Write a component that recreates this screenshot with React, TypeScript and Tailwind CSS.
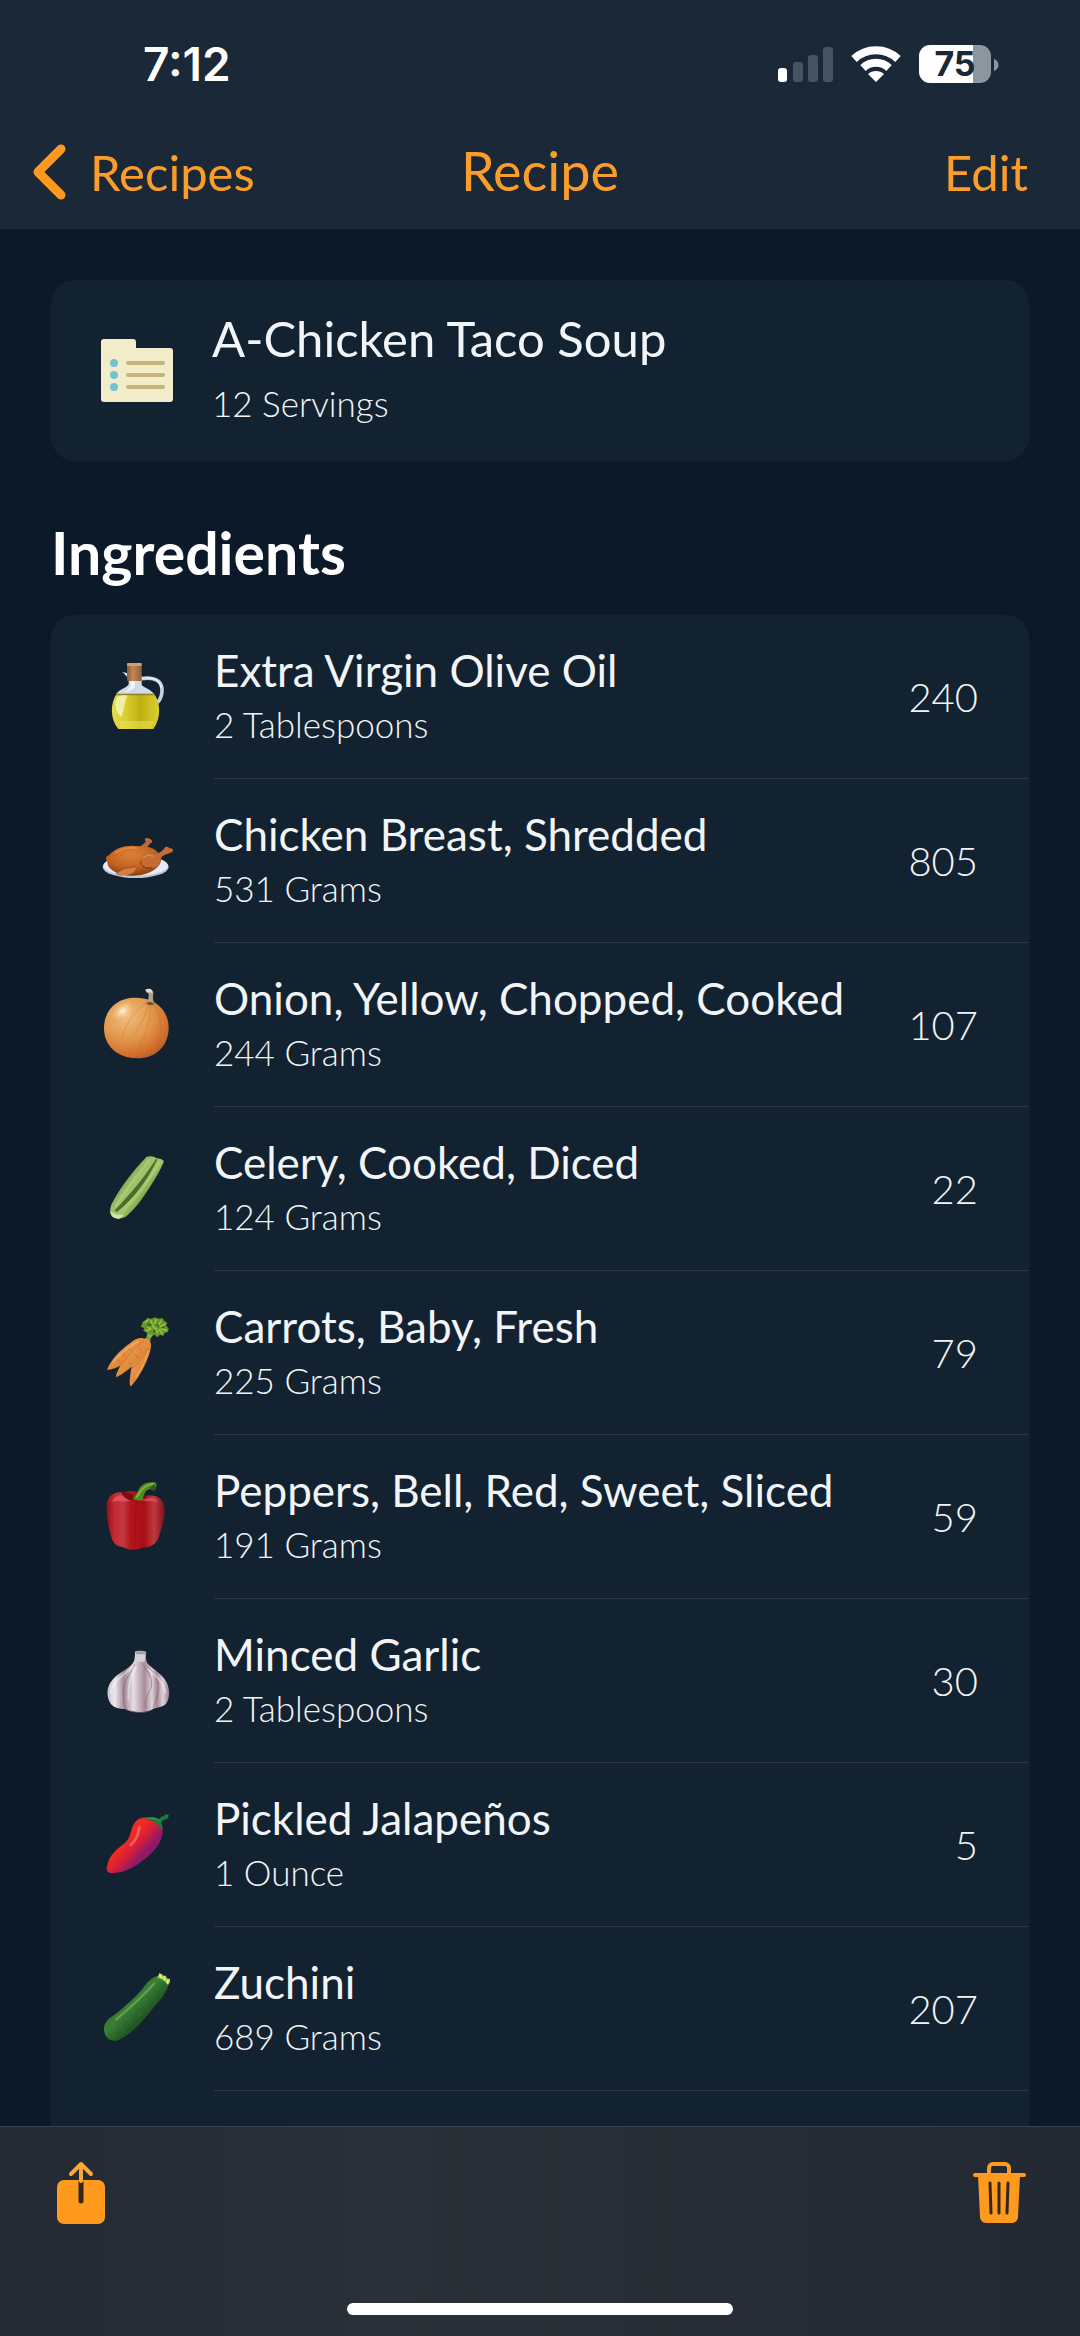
import React from "react";

const ingredients = [
  { name: "Extra Virgin Olive Oil", amount: "2 Tablespoons", calories: 240, icon: OliveOilIcon },
  { name: "Chicken Breast, Shredded", amount: "531 Grams", calories: 805, icon: ChickenIcon },
  { name: "Onion, Yellow, Chopped, Cooked", amount: "244 Grams", calories: 107, icon: OnionIcon },
  { name: "Celery, Cooked, Diced", amount: "124 Grams", calories: 22, icon: CeleryIcon },
  { name: "Carrots, Baby, Fresh", amount: "225 Grams", calories: 79, icon: CarrotsIcon },
  { name: "Peppers, Bell, Red, Sweet, Sliced", amount: "191 Grams", calories: 59, icon: PepperIcon },
  { name: "Minced Garlic", amount: "2 Tablespoons", calories: 30, icon: GarlicIcon },
  { name: "Pickled Jalapeños", amount: "1 Ounce", calories: 5, icon: ChiliIcon },
  { name: "Zuchini", amount: "689 Grams", calories: 207, icon: ZucchiniIcon },
];

function OliveOilIcon() {
  return (
    <svg viewBox="48 48 240 240" className="size-20 shrink-0" aria-hidden="true">
      <defs>
        <linearGradient id="oil" x1="0" x2="1">
          <stop offset="0" stopColor="#e3dc4a" />
          <stop offset="0.3" stopColor="#d9cf2e" />
          <stop offset="0.6" stopColor="#bfae12" />
          <stop offset="1" stopColor="#d8d030" />
        </linearGradient>
        <linearGradient id="cork" x1="0" x2="1">
          <stop offset="0" stopColor="#8a5a34" />
          <stop offset="0.4" stopColor="#c08a58" />
          <stop offset="1" stopColor="#8f5f38" />
        </linearGradient>
      </defs>
      <path d="M184 113c34-6 60 4 62 30 1 20-4 32-14 42" fill="none" stroke="#c5d0dc" strokeWidth="11" />
      <path d="M186 112c32-5 56 6 57 30" fill="none" stroke="#eef3f8" strokeWidth="4" />
      <path d="M126 93l18 4 2 12c-8-2-10-10-20-16z" fill="#dfe7ee" />
      <path d="M146 105h39v27c8 9 26 12 38 28H108c10-16 32-18 38-30z" fill="#d3dbe6" />
      <path d="M152 118h12v22l-30 16c6-10 18-14 18-22z" fill="#f3f6fa" />
      <path d="M110 158h112c20 26 22 72-2 106H115c-26-32-24-78-5-106z" fill="url(#oil)" />
      <path d="M110 158h112l3 5H107z" fill="#8f8620" />
      <path d="M112 168c8-6 22-6 30-4-10 18-8 40-18 64-18-12-22-40-12-60z" fill="#f5f3bb" opacity="0.85" />
      <path d="M118 240h104c-3 10-8 18-12 24h-86c-4-8-6-16-6-24z" fill="#eee65a" opacity="0.5" />
      <rect x="141" y="66" width="44" height="54" rx="3" fill="url(#cork)" />
      <rect x="141" y="66" width="44" height="9" rx="3" fill="#d0a072" />
    </svg>
  );
}

function ChickenIcon() {
  return (
    <svg viewBox="48 540 240 240" className="size-20 shrink-0" aria-hidden="true">
      <defs>
        <radialGradient id="roast" cx="0.45" cy="0.3" r="0.7">
          <stop offset="0" stopColor="#de8238" />
          <stop offset="0.6" stopColor="#c2631f" />
          <stop offset="1" stopColor="#8b4013" />
        </radialGradient>
      </defs>
      <ellipse cx="167" cy="678" rx="99" ry="33" fill="#b9c8d8" />
      <ellipse cx="167" cy="674" rx="97" ry="30" fill="#e6edf4" />
      <path d="M165 620c14-2 24-8 32-18-8-10 6-14 12-8 10 2 10 12 0 14-6 12-18 16-28 24z" fill="#b9693a" />
      <path d="M82 660c-8-4-4-16 6-18 20-24 56-32 90-26 34-4 58 12 66 34 2 28-34 52-82 54-46 2-84-20-80-44z" fill="url(#roast)" />
      <path d="M182 658c4-18 28-22 44-18 12-4 22-10 30-22 8-4 10 4 16 4 12 2 8 12-2 14-12 4-24 8-28 16 2 26-20 32-38 28-16-2-24-10-22-22z" fill="#c46c36" />
      <path d="M182 660c0 16 16 24 34 20" fill="none" stroke="#7c3510" strokeWidth="3" />
      <path d="M190 650c8-8 22-8 32-4" fill="none" stroke="#e09a5c" strokeWidth="4" opacity="0.7" />
      <path d="M108 698c14-14 38-20 60-20 2 12-14 24-32 24-12 4-22 2-28-4z" fill="#d18042" />
      <path d="M108 698c14-14 38-20 60-20" fill="none" stroke="#8c4115" strokeWidth="2" />
      <path d="M108 634c20-12 44-16 62-12" fill="none" stroke="#eda061" strokeWidth="6" strokeLinecap="round" opacity="0.5" />
    </svg>
  );
}

function OnionIcon() {
  return (
    <svg viewBox="48 72 240 240" className="size-20 shrink-0" aria-hidden="true">
      <defs>
        <radialGradient id="onion" cx="0.35" cy="0.3" r="0.75">
          <stop offset="0" stopColor="#f2bd7c" />
          <stop offset="0.5" stopColor="#e29a4d" />
          <stop offset="0.85" stopColor="#d56f2d" />
          <stop offset="1" stopColor="#b9622a" />
        </radialGradient>
        <radialGradient id="onionShine">
          <stop offset="0" stopColor="#fff3df" />
          <stop offset="1" stopColor="#f4c88f" stopOpacity="0" />
        </radialGradient>
      </defs>
      <path d="M72 202c0-56 40-92 92-92 62-2 102 38 102 90 0 56-40 92-94 92-60 0-100-38-100-90z" fill="url(#onion)" />
      <ellipse cx="128" cy="150" rx="36" ry="24" transform="rotate(-35 128 150)" fill="url(#onionShine)" />
      <path d="M200 126c-32 18-60 56-76 108M206 130c-6 30-24 62-46 92M212 130c0 44-10 84-34 126M218 130c24 26 32 70 20 118" fill="none" stroke="#b36c2c" strokeWidth="2" opacity="0.5" />
      <path d="M196 86c14-6 24 0 24 12-2 12-2 20 4 30-8 6-20 6-26-2 8-8 8-16 8-28-4-2-8-4-10-12z" fill="#b9a087" />
      <path d="M196 86c14-6 22 0 22 10l-10-2c-4 0-10-2-12-8z" fill="#e6dbcb" />
      <path d="M198 126c6-4 18-4 26 2-6 6-20 6-26-2z" fill="#7c4e25" />
    </svg>
  );
}

function CeleryIcon() {
  return (
    <svg viewBox="48 564 240 240" className="size-20 shrink-0" aria-hidden="true">
      <defs>
        <linearGradient id="celery" x1="0.1" y1="0.2" x2="0.8" y2="0.8">
          <stop offset="0.2" stopColor="#6f9a42" />
          <stop offset="0.4" stopColor="#9dbf68" />
          <stop offset="0.6" stopColor="#a5c76c" />
          <stop offset="0.8" stopColor="#6f9a3d" />
        </linearGradient>
      </defs>
      <path d="M200 587c10-3 22-2 30 5 8 0 18 3 22 9-10 25-24 49-38 70-20 32-42 66-70 90-12 14-36 14-48 4-8-8-6-26 0-38 26-50 64-98 104-140z" fill="url(#celery)" />
      <path d="M228 594c-34 52-70 98-124 154l6 6c60-50 92-98 122-158z" fill="#47702a" />
      <path d="M240 604c-30 50-62 98-108 142" fill="none" stroke="#b3d080" strokeWidth="5" opacity="0.7" />
      <path d="M210 596c-38 46-74 90-104 142" fill="none" stroke="#b3cf86" strokeWidth="6" opacity="0.7" />
      <path d="M92 750c8 10 24 14 40 10l-12 13c-12 2-30-4-28-23z" fill="#cfe3aa" />
    </svg>
  );
}

function CarrotsIcon() {
  return (
    <svg viewBox="48 66 240 240" className="size-20 shrink-0" aria-hidden="true">
      <defs>
        <linearGradient id="carrot" x1="0" y1="0" x2="1" y2="1">
          <stop offset="0" stopColor="#f1a75e" />
          <stop offset="0.5" stopColor="#e38d3e" />
          <stop offset="1" stopColor="#b9601f" />
        </linearGradient>
      </defs>
      <path d="M196 150c4-20 12-34 26-46l6 6c-10 12-16 26-18 44z" fill="#6f9f2c" />
      <path d="M210 140c2-8 14-18 22-28M206 136c-2-12-4-20-2-30" fill="none" stroke="#8bbb3e" strokeWidth="6" />
      <path d="M188 92l10-6 4-6 12 4 10-5 12 4 12-2 4 8 10 6-4 10 8 6-2 12-10 2-4 10-10-4-8 8-8-8-8 4-4-8-8 4-6-8-8-4 2-8-10-4 4-8z" fill="#67952a" />
      <path d="M196 94l6-6M212 88l4 10M228 86l-4 12M242 90l-6 12M254 100l-12 6M258 118l-14-4M246 128l-8-12M204 108l8 6M198 120l10-4M228 112l4 12M218 104l6 8" stroke="#94c244" strokeWidth="5" strokeLinecap="round" />
      <path d="M209 98l4 4M232 100l3 5M221 124l3-6M248 110l4-2M203 100l4 5" stroke="#385c18" strokeWidth="4" strokeLinecap="round" />
      <path d="M190 142c-14-4-28 4-42 16-28 20-54 46-67 78 12 2 30-6 44-14 34-18 62-44 72-70z" fill="url(#carrot)" />
      <path d="M206 154c10 0 8 14 4 28-12 40-32 76-57 104-6-2-4-20-2-34 4-40 24-72 40-92z" fill="url(#carrot)" />
      <path d="M196 142c14 0 20 12 12 24-22 34-54 70-99 93-4-4 6-26 16-40 20-34 42-66 71-77z" fill="url(#carrot)" />
      <path d="M192 150c-26 14-50 46-66 72M206 172c-14 26-34 48-54 64" fill="none" stroke="#9f501a" strokeWidth="2" opacity="0.6" />
      <path d="M146 172l8 6M128 188l8 6M166 192l10 8M146 214l8 6M176 170l8 6M188 216l8 2M178 240l6 2M112 206l6 5" stroke="#9f501a" strokeWidth="2" opacity="0.7" />
      <path d="M174 152c-30 16-54 36-74 62M204 180c-6 28-20 54-36 78" fill="none" stroke="#ffc88b" strokeWidth="4" strokeLinecap="round" opacity="0.5" />
    </svg>
  );
}

function PepperIcon() {
  return (
    <svg viewBox="48 558 240 240" className="size-20 shrink-0" aria-hidden="true">
      <defs>
        <linearGradient id="pepper" x1="0" x2="1">
          <stop offset="0" stopColor="#93101a" />
          <stop offset="0.14" stopColor="#c62a33" />
          <stop offset="0.28" stopColor="#bf3a40" />
          <stop offset="0.42" stopColor="#b3131b" />
          <stop offset="0.65" stopColor="#a90f17" />
          <stop offset="0.82" stopColor="#bd3a3f" />
          <stop offset="1" stopColor="#7d0f17" />
        </linearGradient>
      </defs>
      <path d="M80 648c-2-30 20-48 50-44 22-6 50-4 64 10 30-6 58 6 60 38 2 34-10 60-18 88-10 22-28 30-50 30-22 10-42 8-58-2-24-2-32-16-36-38-8-28-12-50-12-82z" fill="url(#pepper)" />
      <path d="M124 604c18-4 34 6 40 16 10-10 26-8 36-4-8 12-22 14-36 12-16 2-32-4-40-24z" fill="#7c0b13" />
      <path d="M96 632c6-18 26-24 36-14 10 6 12 12 28 10-22 8-40-2-64 4z" fill="#e8696d" opacity="0.6" />
      <path d="M186 630c20-14 40-10 48 4-14-6-30-4-48-4z" fill="#e25c62" opacity="0.7" />
      <path d="M170 632c-6 36-2 84-6 138" fill="none" stroke="#850a13" strokeWidth="4" opacity="0.3" />
      <path d="M158 622c10-8 14-18 20-30 8-14 24-20 48-18 6 8 4 18-4 24-8-4-16-6-24 2-6 10-10 18-8 26-8 4-26 4-32-4z" fill="#4f8a22" />
      <path d="M170 618c10-10 14-34 50-40" fill="none" stroke="#85b53f" strokeWidth="5" strokeLinecap="round" />
      <path d="M208 592l14-12 6 8-6 12z" fill="#2f5f17" />
    </svg>
  );
}

function GarlicIcon() {
  return (
    <svg viewBox="48 60 240 240" className="size-20 shrink-0" aria-hidden="true">
      <defs>
        <linearGradient id="garlic" x1="0" x2="1">
          <stop offset="0" stopColor="#c8c3cb" />
          <stop offset="0.12" stopColor="#ece8ec" />
          <stop offset="0.27" stopColor="#a18a95" />
          <stop offset="0.42" stopColor="#e6dfe3" />
          <stop offset="0.6" stopColor="#a98c99" />
          <stop offset="0.72" stopColor="#dcd2d8" />
          <stop offset="0.8" stopColor="#a98896" />
          <stop offset="0.9" stopColor="#ddd3d9" />
          <stop offset="1" stopColor="#97828e" />
        </linearGradient>
      </defs>
      <path d="M165 92c8-4 26-4 34 0-2 14-2 28 4 36 18 18 44 30 58 58 10 24 8 48-4 64-12 10-28 10-38 14-18 12-62 14-84 0-16 0-30-2-42-14-14-22-14-48 0-68 20-28 50-34 66-56 6-10 6-22 6-34z" fill="url(#garlic)" />
      <path d="M164 130c-12 30-38 48-34 94 0 20 4 32 10 40M190 132c14 22 32 42 22 72-12 22-20 42-12 60M200 134c24 20 42 50 34 82-4 22-10 34-14 44" fill="none" stroke="#6e5261" strokeWidth="3" opacity="0.5" />
      <path d="M158 138c-22 22-58 36-66 78M168 140c-14 28-26 50-22 96M206 146c24 22 46 38 50 68" fill="none" stroke="#fff" strokeWidth="6" strokeLinecap="round" opacity="0.4" />
      <path d="M168 94c6-4 22-4 28 0l-2 28h-24z" fill="#d9d3d8" />
      <path d="M168 94c6-4 22-4 28 0v6h-28z" fill="#a89ca3" />
      <path d="M136 262c20 14 64 16 84 2-12 14-64 18-84-2z" fill="#6b525e" />
    </svg>
  );
}

function ChiliIcon() {
  return (
    <svg viewBox="48 552 240 240" className="size-20 shrink-0" aria-hidden="true">
      <defs>
        <linearGradient id="chili" x1="0.25" y1="0.3" x2="0.75" y2="0.75">
          <stop offset="0.25" stopColor="#ee2c24" />
          <stop offset="0.5" stopColor="#d81e39" />
          <stop offset="0.8" stopColor="#8f1a68" />
        </linearGradient>
      </defs>
      <path d="M188 590c30-4 62 12 60 44-4 40-38 70-70 92-22 16-46 28-76 30-18 2-26-6-20-22 6-30 24-46 48-64 26-22 20-42 32-62 6-10 14-16 26-18z" fill="url(#chili)" />
      <path d="M178 620c-4 20-8 38-26 52" fill="none" stroke="#ff9a8d" strokeWidth="8" strokeLinecap="round" opacity="0.5" />
      <path d="M190 590c16-2 34-4 46 4 6-4 8-10 16-8 2-6 8-8 14-4 0 8-4 14-14 14-4 2-6 4-8 8 2 8 4 14 4 22-10-14-20-16-26-24-10-6-20-8-32-12z" fill="#1c7a3c" />
      <path d="M206 592c12 0 24 0 32 8" fill="none" stroke="#3aa65a" strokeWidth="3" />
    </svg>
  );
}

function ZucchiniIcon() {
  return (
    <svg viewBox="48 24 240 240" className="size-20 shrink-0" aria-hidden="true">
      <defs>
        <linearGradient id="zucchini" x1="0.3" y1="0.3" x2="0.75" y2="0.75">
          <stop offset="0" stopColor="#2d6a2c" />
          <stop offset="0.3" stopColor="#3a8036" />
          <stop offset="0.6" stopColor="#276128" />
          <stop offset="1" stopColor="#163d1b" />
        </linearGradient>
      </defs>
      <path d="M230 46c14 2 28 10 36 24-8 34-36 56-56 84-26 32-58 66-92 82-16 8-36 0-42-14-10-22-2-38 12-50 38-28 72-56 102-92 10-14 22-28 40-34z" fill="url(#zucchini)" />
      <path d="M222 68c-34 38-74 74-114 108" fill="none" stroke="#86bd78" strokeWidth="7" strokeLinecap="round" opacity="0.5" />
      <path d="M214 92l4 4M196 112l5 5M176 134l5 5M156 152l5 4M136 172l5 5M120 194l5 4M198 134l4 4M176 160l4 4M150 182l4 4M128 210l4 4M102 206l4 4M226 80l4 4M100 224l4 2" stroke="#62a052" strokeWidth="3" strokeLinecap="round" opacity="0.4" />
      <path d="M232 50l6-14 8 4 4 4 8 0 2 8 10 2 0 10-6 8c-8-12-20-20-32-22z" fill="#a9cf4d" />
      <path d="M240 42l4 8M252 48l2 8M264 58l-2 8" stroke="#dcf08f" strokeWidth="5" strokeLinecap="round" />
    </svg>
  );
}

function FolderIcon() {
  return (
    <svg viewBox="0 0 80 80" className="size-20 shrink-0" aria-hidden="true">
      <path d="M8 9h29a3 3 0 0 1 3 3v6h34a3 3 0 0 1 3 3v48a3 3 0 0 1-3 3H8a3 3 0 0 1-3-3V12a3 3 0 0 1 3-3z" fill="#f3ecca" />
      <g fill="#74c4cf">
        <circle cx="18" cy="33" r="4" />
        <circle cx="18" cy="45" r="4" />
        <circle cx="18" cy="57" r="4" />
      </g>
      <path d="M32 33h35M32 45h35M32 57h35" stroke="#c3b57c" strokeWidth="4" strokeLinecap="round" />
    </svg>
  );
}

function StatusIcons() {
  return (
    <svg viewBox="777 40 222 46" className="h-[46px] w-[222px]" role="img" aria-label="Signal, Wi-Fi and battery">
      <rect x="778" y="67" width="9" height="14" rx="3" fill="#fff" />
      <rect x="793" y="61" width="10" height="20" rx="3" fill="#465360" />
      <rect x="808" y="54" width="10" height="27" rx="3" fill="#465360" />
      <rect x="823" y="46" width="10" height="35" rx="3" fill="#465360" />
      <g fill="none" stroke="#fff" strokeWidth="8">
        <path d="M854 58a32 32 0 0 1 44 0" />
        <path d="M863 67a19 19 0 0 1 26 0" />
      </g>
      <path d="M868 73c4-4 12-4 16 0l-8 8z" fill="#fff" />
      <path d="M930 44h43v38h-43a11 11 0 0 1-11-11V55a11 11 0 0 1 11-11z" fill="#fff" />
      <path d="M973 44h7a11 11 0 0 1 11 11v16a11 11 0 0 1-11 11h-7z" fill="#8d959e" />
      <path d="M994 58c6 2 6 10 0 12z" fill="#8d959e" />
      <text x="955" y="75" textAnchor="middle" fill="#1a2836" fontFamily="Inter, sans-serif" fontWeight="700" fontSize="34">
        75
      </text>
    </svg>
  );
}

export default function App() {
  return (
    <div className="flex h-screen flex-col bg-[#0c1928] font-[Lato,sans-serif] text-[#f2f5f7]">
      <header className="shrink-0 border-b border-[#1f2d3a] bg-[#1a2837] pt-[34px]">
        <div className="flex h-[60px] items-center justify-between pr-[81px] pl-[143px]">
          <span className="font-[Inter,sans-serif] text-[46px] leading-none font-semibold text-white">7:12</span>
          <StatusIcons />
        </div>

        <nav className="mt-[26px] grid h-[108px] grid-cols-[1fr_auto_1fr] items-start px-8 text-[#fb9d2b]">
          <a href="#recipes" className="flex items-center gap-6 text-[49px] leading-[104px]">
            <svg viewBox="0 0 34 58" className="h-[58px] w-[34px]" aria-hidden="true">
              <path d="M29 6L6 29l23 23" fill="none" stroke="#ff9a1f" strokeWidth="9" strokeLinecap="round" strokeLinejoin="round" />
            </svg>
            Recipes
          </a>
          <h1 className="text-center text-[54px] leading-[102px]">Recipe</h1>
          <button type="button" className="justify-self-end pr-5 text-[49px] leading-[104px]">
            Edit
          </button>
        </nav>
      </header>

      <main className="flex min-h-0 flex-1 flex-col overflow-hidden px-[51px] pt-[51px]">
        <section className="flex shrink-0 items-center gap-9 rounded-3xl bg-[#132231] pt-[25px] pr-[51px] pb-[26px] pl-[45px]">
          <FolderIcon />
          <div>
            <h2 className="text-[49px] leading-[66px]">A-Chicken Taco Soup</h2>
            <p className="text-[35px] leading-[64px] font-light">12 Servings</p>
          </div>
        </section>

        <h2 className="mt-[60px] mb-[30px] text-[59px] leading-[64px] font-bold text-white">Ingredients</h2>

        <ul className="flex-1 rounded-t-3xl bg-[#132231]">
          {ingredients.map(({ name, amount, calories, icon: Icon }) => (
            <li key={name} className="flex items-center gap-[38px] pl-[45px]">
              <Icon />
              <div className="flex h-[164px] flex-1 items-center justify-between border-b border-[#2a3743] pr-[51px]">
                <div>
                  <h3 className="text-[44px] leading-[54px]">{name}</h3>
                  <p className="text-[35px] leading-[54px] font-light">{amount}</p>
                </div>
                <span className="text-[40px] leading-none font-light">{calories}</span>
              </div>
            </li>
          ))}
        </ul>
      </main>

      <footer className="flex h-[210px] shrink-0 flex-col justify-between border-t border-[#3a434d] bg-linear-to-r from-[#232a31] via-[#2a3038] via-35% to-[#232932] pt-[33px] pb-[21px]">
        <div className="flex items-center justify-between px-[54px]">
          <button type="button" aria-label="Share">
            <svg viewBox="54 2160 54 66" className="h-[66px] w-[54px]" aria-hidden="true">
              <rect x="57" y="2180" width="48" height="44" rx="7" fill="#ff9a1f" />
              <path d="M81 2182v19" stroke="#33261a" strokeWidth="5" strokeLinecap="round" />
              <path d="M81 2181v-15M71 2174l10-10 10 10" fill="none" stroke="#fba73c" strokeWidth="4" strokeLinecap="round" strokeLinejoin="round" />
            </svg>
          </button>
          <button type="button" aria-label="Delete">
            <svg viewBox="972 2160 54 66" className="h-[66px] w-[54px]" aria-hidden="true">
              <path d="M989 2174v-6a4 4 0 0 1 4-4h12a4 4 0 0 1 4 4v6" fill="none" stroke="#ff9a1f" strokeWidth="4" />
              <path d="M975 2175h49" stroke="#ff9a1f" strokeWidth="4" strokeLinecap="round" />
              <path d="M978 2175h42l-2 42a6 6 0 0 1-6 6h-26a6 6 0 0 1-6-6z" fill="#ff9a1f" />
              <path d="M990 2183l1 30M999 2183v30M1008 2183l-1 30" stroke="#33261a" strokeWidth="3" strokeLinecap="round" />
            </svg>
          </button>
        </div>
        <div className="mx-auto h-3 w-[386px] rounded-full bg-white" />
      </footer>
    </div>
  );
}
